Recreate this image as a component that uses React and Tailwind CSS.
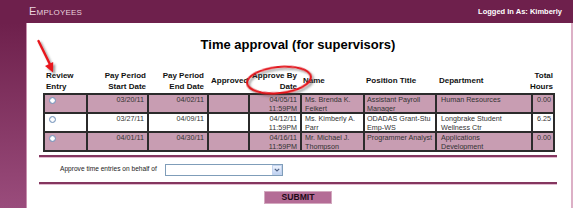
import React from "react";

const rows = [
  {
    pink: true,
    start: "03/20/11",
    end: "04/02/11",
    by: ["04/05/11", "11:59PM"],
    name: ["Ms. Brenda K.", "Feikert"],
    pos: ["Assistant Payroll", "Manager"],
    dept: ["Human Resources"],
    hours: "0.00",
  },
  {
    pink: false,
    start: "03/27/11",
    end: "04/09/11",
    by: ["04/12/11", "11:59PM"],
    name: ["Ms. Kimberly A.", "Parr"],
    pos: ["ODADAS Grant-Stu", "Emp-WS"],
    dept: ["Longbrake Student", "Wellness Ctr"],
    hours: "6.25",
  },
  {
    pink: true,
    start: "04/01/11",
    end: "04/30/11",
    by: ["04/16/11", "11:59PM"],
    name: ["Mr. Michael J.", "Thompson"],
    pos: ["Programmer Analyst"],
    dept: ["Applications", "Development"],
    hours: "0.00",
  },
];

function Lines({ items }) {
  return items.map((t, i) => (
    <div key={i} className="whitespace-nowrap">
      {t}
    </div>
  ));
}

const cols = "grid grid-cols-[41px_59px_58px_39px_50px_61px_70px_94px_20px] gap-x-[2px]";

export default function App() {
  const th = "text-[8px] leading-[10.5px] font-bold text-[#111] whitespace-nowrap";
  return (
    <div className="relative w-[573px] h-[208px] overflow-hidden bg-[#6e204c] font-['Liberation_Sans',Arial,sans-serif]">
      <div className="h-[23px] flex items-center justify-between pl-[29px] pr-[11px]">
        <span className="text-[11px] leading-none text-[#ead2de] [font-variant:small-caps] tracking-[0.2px]">
          Employees
        </span>
        <span className="text-[7.5px] leading-none font-bold text-white">Logged In As: Kimberly</span>
      </div>
      <div className="flex h-[185px]">
        <div className="w-[27px] bg-linear-to-b from-[#6e204c] to-[#9a4c7c] border-r border-[#c890ae]" />
        <div className="flex-1 bg-white flex flex-col pl-[12px] pr-[14px]">
          <div className="text-center text-[13px] leading-[16px] font-bold text-black mt-[14px]">
            Time approval (for supervisors)
          </div>
          <div className="ml-[4px] w-[512px] mt-[17px]">
            <div className={cols + " px-[2px] h-[23px] items-center"}>
              <div className={th + " pl-[1px]"}>
                Review
                <br />
                Entry
              </div>
              <div className={th + " text-right pr-[1px]"}>
                Pay Period
                <br />
                Start Date
              </div>
              <div className={th + " text-right pr-[3px]"}>
                Pay Period
                <br />
                End Date
              </div>
              <div className={th + " pl-[2px]"}>Approved</div>
              <div className={th + " text-right pr-[3px] -ml-[10px]"}>
                Approve By
                <br />
                Date
              </div>
              <div className={th + " pl-[1px]"}>Name</div>
              <div className={th + " pl-[1px]"}>Position Title</div>
              <div className={th + " pl-[2px]"}>Department</div>
              <div className={th + " text-right -ml-[10px]"}>
                Total
                <br />
                Hours
              </div>
            </div>
            <div className={cols + " gap-y-[2px] bg-[#2b2b2b] p-[2px] text-[7.2px] leading-[9px] text-[#333]"}>
              {rows.map((r, i) => {
                const bg = r.pink ? "bg-[#c89db2]" : "bg-white";
                const c = bg + " h-[17px] overflow-visible";
                return (
                  <React.Fragment key={i}>
                    <div className={c + " pl-[4px] pt-[2px]"}>
                      <div className="w-[7px] h-[7px] rounded-full border border-[#6f8fb8] bg-white shadow-[inset_0_0_1px_#9db3d4]" />
                    </div>
                    <div className={c + " text-right pr-[3px]"}>{r.start}</div>
                    <div className={c + " text-right pr-[3px]"}>{r.end}</div>
                    <div className={c}></div>
                    <div className={c + " text-right pr-[3px]"}>
                      <Lines items={r.by} />
                    </div>
                    <div className={c + " pl-[3px]"}>
                      <Lines items={r.name} />
                    </div>
                    <div className={c + " pl-[2px]"}>
                      <Lines items={r.pos} />
                    </div>
                    <div className={c + " pl-[4px]"}>
                      <Lines items={r.dept} />
                    </div>
                    <div className={c + " text-right pr-[2px]"}>{r.hours}</div>
                  </React.Fragment>
                );
              })}
            </div>
          </div>
          <div className="mt-[3px] h-[2px] bg-[#84365f] shadow-[0_1px_0_#e2bcd0]" />
          <div className="h-[25px] flex items-center pl-[21px]">
            <span className="text-[6.6px] leading-none text-[#222]">Approve time entries on behalf of</span>
            <div className="ml-[8px] w-[118px] h-[12px] border border-[#7f9db9] bg-white flex justify-end">
              <div className="w-[10px] h-full bg-linear-to-b from-[#eef3fd] to-[#bfd2f2] border border-[#c3d3ee] flex items-center justify-center">
                <svg width="6" height="4" viewBox="0 0 6 4">
                  <path d="M0.8 0.8 L3 3 L5.2 0.8" fill="none" stroke="#4d6185" strokeWidth="1.2" />
                </svg>
              </div>
            </div>
          </div>
          <div className="h-[2px] bg-[#84365f] shadow-[0_1px_0_#e2bcd0]" />
          <div className="flex justify-center mt-[7px]">
            <div className="w-[68px] h-[13px] bg-[#b46c96] border border-[#d3a9bf] flex items-center justify-center text-[8.6px] leading-none font-bold text-[#1e0a16]">
              SUBMIT
            </div>
          </div>
        </div>
        <div className="w-[2px] bg-[#dcb0c6]" />
      </div>
      <svg className="absolute inset-0 pointer-events-none" width="573" height="208" viewBox="0 0 573 208">
        <defs>
          <filter id="sh" x="-20%" y="-20%" width="150%" height="150%">
            <feDropShadow dx="2" dy="2" stdDeviation="1.2" floodColor="#444" floodOpacity="0.55" />
          </filter>
        </defs>
        <g filter="url(#sh)">
          <line x1="38.5" y1="41" x2="49.8" y2="64" stroke="#e8141c" strokeWidth="2.4" strokeLinecap="round" />
          <polygon points="53,72.5 45,65.9 53.2,61.9" fill="#e8141c" />
          <ellipse
            cx="279"
            cy="80"
            rx="32"
            ry="13"
            transform="rotate(-6 279 80)"
            fill="none"
            stroke="#e3131b"
            strokeWidth="2.2"
          />
        </g>
      </svg>
    </div>
  );
}
